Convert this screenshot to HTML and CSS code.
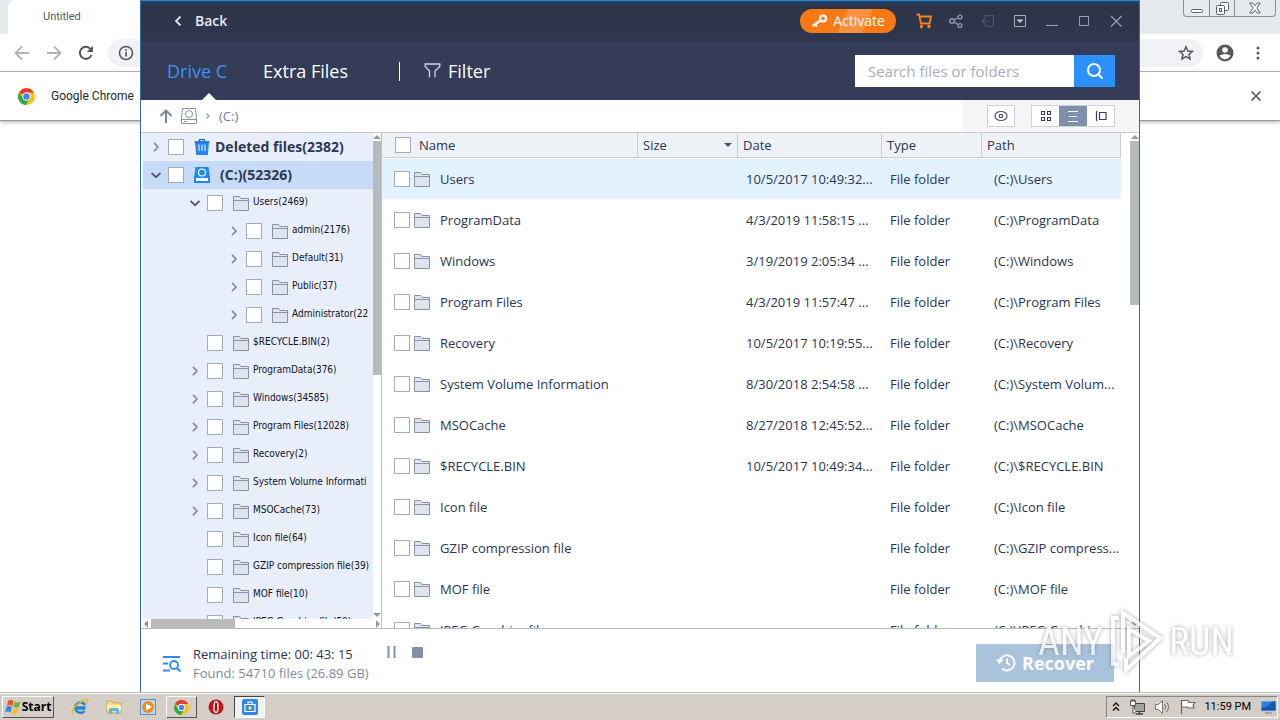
FILE: index.html
```html
<!DOCTYPE html>
<html lang="en">
<head>
<meta charset="utf-8">
<title>File recovery</title>
<link rel="stylesheet" href="styles.css">
</head>
<body>
<svg class="defs" aria-hidden="true">
  <symbol id="folder" viewBox="0 0 16 16"><path d="M.5 15.500V1.500h6l1.500 2h7.500v12z" fill="#dfe5ee" stroke="#8992a3"/><path d="M1 5.500h14" stroke="#8992a3" fill="none"/></symbol>
  <symbol id="right" viewBox="0 0 10 10"><path d="M3 .8 7 5 3 9.200" fill="none" stroke="#858c9a" stroke-width="1.700"/></symbol>
  <symbol id="down" viewBox="0 0 10 10"><path d="M.5 3 5 7.200 9.500 3" fill="none" stroke="#4c5870" stroke-width="1.900"/></symbol>
  <symbol id="chrome" viewBox="0 0 16 16"><circle cx="8" cy="8" r="8" fill="#fbc116"/><path d="M8 8 1 4.200A8 8 0 0 1 15 4.300H8z" fill="#e33b2e"/><path d="M1 4.200A8 8 0 0 0 7.400 16L11 10 8 8 4.500 9.500z" fill="#2da94f"/><circle cx="8" cy="8" r="3.900" fill="#fff"/><circle cx="8" cy="8" r="3" fill="#4285f4"/></symbol>
</svg>

<main class="desktop">
  <section class="browser" aria-label="Browser">
    <div class="tabs">
      <div class="tab">Untitled</div>
      <div class="winbtns">
        <button aria-label="Minimize"><svg width="12" height="12" viewBox="0 0 12 12"><rect x=".5" y="7.500" width="11" height="3" rx="1" fill="#fff" stroke="#5d6268"/></svg></button>
        <button aria-label="Restore"><svg width="13" height="13" viewBox="0 0 13 13" fill="#fff" stroke="#5d6268"><rect x="4.500" y=".5" width="8" height="8" rx="1"/><rect x=".5" y="3.500" width="8" height="9" rx="1"/><rect x="3.500" y="6.500" width="2" height="3"/></svg></button>
        <button class="wide" aria-label="Close"><svg width="12" height="12" viewBox="0 0 12 12"><path d="M.7 1h3L6 3.800 8.300 1h3L7.800 6l3.500 5h-3L6 8.200 3.700 11h-3L4.200 6z" fill="#fff" stroke="#5d6268"/></svg></button>
      </div>
    </div>
    <div class="toolbar">
      <svg width="16" height="16" viewBox="0 0 16 16" fill="none" stroke="#b0b2b5" stroke-width="1.800"><path d="M15 8H2M8 1.500 1.500 8 8 14.500"/></svg>
      <svg width="16" height="16" viewBox="0 0 16 16" fill="none" stroke="#b0b2b5" stroke-width="1.800"><path d="M1 8h13M8 1.500 14.500 8 8 14.500"/></svg>
      <svg width="16" height="16" viewBox="0 0 16 16"><path d="M13.500 10A6 6 0 1 1 12.500 4" fill="none" stroke="#55585c" stroke-width="2"/><path d="M15 .8V7H8.800z" fill="#55585c"/></svg>
      <div class="omnibox">
        <svg width="16" height="16" viewBox="0 0 16 16"><circle cx="8" cy="8" r="6.500" fill="none" stroke="#55585c" stroke-width="1.500"/><path d="M8 7v4.500M8 4.200v1.700" stroke="#55585c" stroke-width="1.700"/></svg>
        <svg width="16" height="16" viewBox="0 0 16 16"><path d="m8 1.800 1.900 4.200 4.600.4-3.500 3 1.100 4.500L8 11.500l-4.100 2.400L5 9.400l-3.500-3L6.100 6z" fill="none" stroke="#55585c" stroke-width="1.500"/></svg>
      </div>
      <svg width="18" height="18" viewBox="0 0 18 18"><circle cx="9" cy="9" r="8.500" fill="#55585c"/><circle cx="9" cy="6" r="2.800" fill="#fff"/><path d="M3.500 11.500q5.500-3 11 0-2 3.700-5.500 3.700t-5.500-3.700z" fill="#fff"/></svg>
      <svg width="16" height="16" viewBox="0 0 16 16" fill="#55585c"><circle cx="8" cy="3" r="1.500"/><circle cx="8" cy="8" r="1.500"/><circle cx="8" cy="13" r="1.500"/></svg>
    </div>
    <div class="infobar">
      <svg width="17" height="17"><use href="#chrome"/></svg><span>Google Chrome</span>
      <button aria-label="Dismiss"><svg width="12" height="12" viewBox="0 0 12 12"><path d="m1.500 1.500 9 9m0-9-9 9" stroke="#5b5e62" stroke-width="1.700"/></svg></button>
    </div>
  </section>

  <section class="app" aria-label="Data recovery">
    <header class="titlebar">
      <button class="back"><svg width="8" height="10" viewBox="0 0 8 10"><path d="M6.500.5 2 5l4.500 4.500" fill="none" stroke="#e6eaf2" stroke-width="1.800"/></svg>Back</button>
      <button class="activate"><svg width="17" height="14" viewBox="0 0 17 14"><circle cx="12" cy="4.500" r="3" fill="none" stroke="#fff" stroke-width="2.200"/><path d="M9.500 6.500 1.500 12M4 10.300l2 2.200" fill="none" stroke="#fff" stroke-width="2.200"/></svg>Activate</button>
      <div class="sys">
        <button aria-label="Cart"><svg viewBox="0 0 16 16" fill="none" stroke="#f58220" stroke-width="1.900"><path d="M.5 1.500H3l2 9h8.500l1.500-7H4"/><circle cx="5.500" cy="13.500" r=".8"/><circle cx="13" cy="13.500" r=".8"/></svg></button>
        <button aria-label="Share"><svg viewBox="0 0 16 16" fill="none" stroke="#8c96ab" stroke-width="1.400"><circle cx="4" cy="8" r="2.300"/><circle cx="12" cy="4" r="1.900"/><circle cx="12" cy="12.500" r="1.900"/><path d="m6 7 4.300-2.200M6 9l4.200 2.600"/></svg></button>
        <button aria-label="Import" disabled><svg viewBox="0 0 16 16" fill="none" stroke="#4a546a" stroke-width="1.200"><path d="M5.500 5V2.500h8v11h-8V11M10 8H2m3-2.500L2 8l3 2.500"/></svg></button>
        <button aria-label="Menu"><svg viewBox="0 0 16 16"><path d="M2.500 2.500h11v11h-11z" fill="none" stroke="#a2abbb"/><path d="M4.500 6.500h7L8 10z" fill="#c4cad6"/></svg></button>
        <button aria-label="Minimize window"><svg viewBox="0 0 16 16"><path d="M2 12.500h12" stroke="#98a2b4"/></svg></button>
        <button aria-label="Maximize window"><svg viewBox="0 0 16 16"><path d="M3.500 3.500h9v9h-9z" fill="none" stroke="#98a2b4"/></svg></button>
        <button aria-label="Close window"><svg viewBox="0 0 16 16"><path d="m3 3 10.500 10.500m0-10.500L3 13.500" stroke="#98a2b4" stroke-width="1.200"/></svg></button>
      </div>
    </header>

    <nav class="nav">
      <a class="navtab current" href="#drive">Drive C</a>
      <a class="navtab" href="#extra">Extra Files</a>
      <span class="rule"></span>
      <button class="filter"><svg width="17" height="16" viewBox="0 0 17 16" fill="none" stroke="#cdd5e3" stroke-width="1.300"><path d="M5.500 14.500V8L1.200 3.500V1h14.600v2.500L11 8v6.500"/></svg>Filter</button>
      <form class="search">
        <input type="text" aria-label="Search files or folders" placeholder="Search files or folders">
        <button type="button" aria-label="Search"><svg width="18" height="18" viewBox="0 0 18 18" fill="none" stroke="#fff" stroke-width="2"><circle cx="8" cy="8" r="6"/><path d="m12.500 12.500 4 4"/></svg></button>
      </form>
    </nav>

    <div class="crumbs">
      <div class="path">
        <svg width="14" height="14" viewBox="0 0 14 14" fill="none" stroke="#7c889d" stroke-width="2"><path d="M7 14V2M1.500 7 7 1.500 12.500 7"/></svg>
        <svg width="18" height="16" viewBox="0 0 18 16" fill="none" stroke="#8692a8"><path d="M2.500.5h13l1 11v4h-15v-4zM1.500 11.500h15"/><circle cx="9" cy="6" r="3.500"/><path d="M4 13.500h3"/></svg>
        <svg width="6" height="8" viewBox="0 0 6 8"><path d="m1.500 1.500 2.500 2.500-2.500 2.500" fill="none" stroke="#8e98aa" stroke-width="1.200"/></svg>
        <span>(C:)</span>
      </div>
      <div class="views">
        <button class="eye" aria-label="Preview"><svg width="14" height="12" viewBox="0 0 14 12" fill="none" stroke="#48536a" stroke-width="1.200"><ellipse cx="7" cy="6" rx="6" ry="4.500"/><circle cx="7" cy="6" r="1.700"/></svg></button>
        <div class="group">
          <button aria-label="Grid view"><svg width="12" height="12" viewBox="0 0 12 12" fill="none" stroke="#33405c" stroke-width="1.100"><path d="M1.500 1.500h3v3h-3zM7.500 1.500h3v3h-3zM1.500 7.500h3v3h-3zM7.500 7.500h3v3h-3z"/></svg></button>
          <button class="on" aria-label="List view"><svg width="12" height="12" viewBox="0 0 12 12"><path d="M1 1.500h10M2 6.500h8M1 11.500h10" stroke="#fff"/></svg></button>
          <button aria-label="Detail view"><svg width="12" height="12" viewBox="0 0 12 12" fill="none" stroke="#33405c" stroke-width="1.200"><path d="M1.500 1v10M4.500 2.500h6.500v7H4.500z"/></svg></button>
        </div>
      </div>
    </div>

    <div class="content">
      <aside class="side">
        <div class="treewrap">
          <div class="tree">
            <label class="node root"><svg class="arr"><use href="#right"/></svg><input type="checkbox"><svg class="ico" viewBox="0 0 16 16"><path d="M1 3h14l-1.200 13H2.200z" fill="#2387f1"/><path d="M.5 2.800h15M5.500 2.500V.7h5v1.800" fill="none" stroke="#1767bd" stroke-width="1.200"/><path d="M5 5.500V12M8 5.500V12M11 5.500V12" stroke="#fff"/></svg><span>Deleted files(2382)</span></label>
            <label class="node root drive"><svg class="arr"><use href="#down"/></svg><input type="checkbox"><svg class="ico" viewBox="0 0 16 16"><path d="M1.500 0h13L16 10v6H0v-6z" fill="#2387f1"/><circle cx="8" cy="5.500" r="3.500" fill="none" stroke="#fff" stroke-width="1.200"/><path d="M2 11h12v3H2z" fill="#fff"/></svg><span>(C:)(52326)</span></label>
            <label class="node sub"><svg class="arr"><use href="#down"/></svg><input type="checkbox"><svg class="ico"><use href="#folder"/></svg><span>Users(2469)</span></label>
            <label class="node leaf"><svg class="arr"><use href="#right"/></svg><input type="checkbox"><svg class="ico"><use href="#folder"/></svg><span>admin(2176)</span></label>
            <label class="node leaf"><svg class="arr"><use href="#right"/></svg><input type="checkbox"><svg class="ico"><use href="#folder"/></svg><span>Default(31)</span></label>
            <label class="node leaf"><svg class="arr"><use href="#right"/></svg><input type="checkbox"><svg class="ico"><use href="#folder"/></svg><span>Public(37)</span></label>
            <label class="node leaf"><svg class="arr"><use href="#right"/></svg><input type="checkbox"><svg class="ico"><use href="#folder"/></svg><span>Administrator(22</span></label>
            <label class="node sub"><svg class="arr"></svg><input type="checkbox"><svg class="ico"><use href="#folder"/></svg><span>$RECYCLE.BIN(2)</span></label>
            <label class="node sub"><svg class="arr"><use href="#right"/></svg><input type="checkbox"><svg class="ico"><use href="#folder"/></svg><span>ProgramData(376)</span></label>
            <label class="node sub"><svg class="arr"><use href="#right"/></svg><input type="checkbox"><svg class="ico"><use href="#folder"/></svg><span>Windows(34585)</span></label>
            <label class="node sub"><svg class="arr"><use href="#right"/></svg><input type="checkbox"><svg class="ico"><use href="#folder"/></svg><span>Program Files(12028)</span></label>
            <label class="node sub"><svg class="arr"><use href="#right"/></svg><input type="checkbox"><svg class="ico"><use href="#folder"/></svg><span>Recovery(2)</span></label>
            <label class="node sub"><svg class="arr"><use href="#right"/></svg><input type="checkbox"><svg class="ico"><use href="#folder"/></svg><span>System Volume Informati</span></label>
            <label class="node sub"><svg class="arr"><use href="#right"/></svg><input type="checkbox"><svg class="ico"><use href="#folder"/></svg><span>MSOCache(73)</span></label>
            <label class="node sub"><svg class="arr"></svg><input type="checkbox"><svg class="ico"><use href="#folder"/></svg><span>Icon file(64)</span></label>
            <label class="node sub"><svg class="arr"></svg><input type="checkbox"><svg class="ico"><use href="#folder"/></svg><span>GZIP compression file(39)</span></label>
            <label class="node sub"><svg class="arr"></svg><input type="checkbox"><svg class="ico"><use href="#folder"/></svg><span>MOF file(10)</span></label>
            <label class="node sub"><svg class="arr"></svg><input type="checkbox"><svg class="ico"><use href="#folder"/></svg><span>JPEG Graphics file(59)</span></label>
          </div>
          <div class="vbar"><i class="up"></i><b class="treethumb"></b><i class="dn"></i></div>
        </div>
        <div class="hbar"><i class="lf"></i><b></b><i class="rt"></i></div>
      </aside>

      <div class="files">
        <table>
          <colgroup><col><col class="c-size"><col class="c-date"><col class="c-type"><col class="c-path"></colgroup>
          <thead><tr><th><label class="cell head"><input type="checkbox">Name</label></th><th><span class="sort">Size<i></i></span></th><th>Date</th><th>Type</th><th>Path</th></tr></thead>
          <tbody>
            <tr class="picked"><td><label class="cell"><input type="checkbox"><svg class="ico"><use href="#folder"/></svg><span>Users</span></label></td><td></td><td>10/5/2017 10:49:32...</td><td>File folder</td><td>(C:)\Users</td></tr>
            <tr><td><label class="cell"><input type="checkbox"><svg class="ico"><use href="#folder"/></svg><span>ProgramData</span></label></td><td></td><td>4/3/2019 11:58:15 ...</td><td>File folder</td><td>(C:)\ProgramData</td></tr>
            <tr><td><label class="cell"><input type="checkbox"><svg class="ico"><use href="#folder"/></svg><span>Windows</span></label></td><td></td><td>3/19/2019 2:05:34 ...</td><td>File folder</td><td>(C:)\Windows</td></tr>
            <tr><td><label class="cell"><input type="checkbox"><svg class="ico"><use href="#folder"/></svg><span>Program Files</span></label></td><td></td><td>4/3/2019 11:57:47 ...</td><td>File folder</td><td>(C:)\Program Files</td></tr>
            <tr><td><label class="cell"><input type="checkbox"><svg class="ico"><use href="#folder"/></svg><span>Recovery</span></label></td><td></td><td>10/5/2017 10:19:55...</td><td>File folder</td><td>(C:)\Recovery</td></tr>
            <tr><td><label class="cell"><input type="checkbox"><svg class="ico"><use href="#folder"/></svg><span>System Volume Information</span></label></td><td></td><td>8/30/2018 2:54:58 ...</td><td>File folder</td><td>(C:)\System Volum...</td></tr>
            <tr><td><label class="cell"><input type="checkbox"><svg class="ico"><use href="#folder"/></svg><span>MSOCache</span></label></td><td></td><td>8/27/2018 12:45:52...</td><td>File folder</td><td>(C:)\MSOCache</td></tr>
            <tr><td><label class="cell"><input type="checkbox"><svg class="ico"><use href="#folder"/></svg><span>$RECYCLE.BIN</span></label></td><td></td><td>10/5/2017 10:49:34...</td><td>File folder</td><td>(C:)\$RECYCLE.BIN</td></tr>
            <tr><td><label class="cell"><input type="checkbox"><svg class="ico"><use href="#folder"/></svg><span>Icon file</span></label></td><td></td><td></td><td>File folder</td><td>(C:)\Icon file</td></tr>
            <tr><td><label class="cell"><input type="checkbox"><svg class="ico"><use href="#folder"/></svg><span>GZIP compression file</span></label></td><td></td><td></td><td>File folder</td><td>(C:)\GZIP compress...</td></tr>
            <tr><td><label class="cell"><input type="checkbox"><svg class="ico"><use href="#folder"/></svg><span>MOF file</span></label></td><td></td><td></td><td>File folder</td><td>(C:)\MOF file</td></tr>
            <tr><td><label class="cell"><input type="checkbox"><svg class="ico"><use href="#folder"/></svg><span>JPEG Graphics file</span></label></td><td></td><td></td><td>File folder</td><td>(C:)\JPEG Graphi...</td></tr>
          </tbody>
        </table>
        <div class="vbar"><i class="up"></i><b class="listthumb"></b><i class="dn"></i></div>
      </div>
    </div>

    <footer class="status">
      <svg width="18" height="18" viewBox="0 0 18 18" fill="none" stroke="#2b8cf0" stroke-width="1.800"><path d="M0 2h17M0 8.500h5M0 15.500h7"/><circle cx="11" cy="10" r="4"/><path d="m14 13 3.500 3.500"/></svg>
      <div class="progress"><p>Remaining time: 00: 43: 15</p><p class="found">Found: 54710 files (26.89 GB)</p></div>
      <div class="controls">
        <button aria-label="Pause"><svg width="12" height="12" viewBox="0 0 12 12"><path d="M2.500 0v12M8.500 0v12" stroke="#8190a8" stroke-width="2"/></svg></button>
        <button aria-label="Stop"><svg width="12" height="12" viewBox="0 0 12 12"><rect x="1" y="1" width="11" height="11" rx="1" fill="#8190a8"/></svg></button>
      </div>
      <button class="recover"><svg width="20" height="18" viewBox="0 0 20 18" fill="none" stroke="#fff" stroke-width="2"><path d="M3.500 8.500a7.500 7.500 0 1 1 2.500 6M11 4.500V9l3 2"/><path d="M0 5.500h7.500L3.500 10z" fill="#fff" stroke="none"/></svg>Recover</button>
    </footer>
  </section>

  <div class="watermark">
    <span>ANY</span>
    <svg width="54" height="66" viewBox="0 0 54 66" fill="none" stroke="#fff" stroke-width="4"><path d="M10 9H4v46h6M14 44V4l37 25L17 61V49"/><path d="M20 20v27l20-15z"/></svg>
    <span>RUN</span>
  </div>
</main>

<footer class="taskbar">
  <button class="start"><svg width="17" height="16" viewBox="0 0 17 16"><path d="M3 2q3-2 5.500 0L7.500 7q-3-2-5.500 0z" fill="#e6562b"/><path d="M9.500 2.500q3 2 6 0L14 8q-3 1.500-5.500 0z" fill="#73b43c"/><path d="M1.500 8q3-2 5.500 0L5.500 13.500q-2.500-2-5.500 0z" fill="#3a86d8"/><path d="M8 9q3 2 5.500 0L12 14.500q-3 1.500-5.500 0z" fill="#f6bd28"/></svg>Start</button>
  <div class="tasks">
    <button aria-label="Internet Explorer"><svg viewBox="0 0 18 18"><path d="M14.500 10.500H5.500M14 7A5.200 5.200 0 1 0 13.500 13M4.500 9.500h10" fill="none" stroke="#2586d8" stroke-width="2.600"/><path d="M2 16Q-1 12 7 6t9.500-4q1 1-.5 3.500" fill="none" stroke="#e8b92e" stroke-width="1.500"/></svg></button>
    <button aria-label="Explorer"><svg viewBox="0 0 18 18"><path d="M2 3h5l1 2h8v10H2z" fill="#f4dc83" stroke="#c8ad58"/><path d="M2 7h14v5H2z" fill="#fbefb4"/><path d="M4 16v-4q0-2 2-2h6q2 0 2 2v4h-3v-3H7v3z" fill="#62b5e0"/></svg></button>
    <button aria-label="Media Player"><svg viewBox="0 0 18 18"><rect x="1.500" y="1.500" width="15" height="15" fill="#bcd9f2" stroke="#5890c8"/><circle cx="9" cy="9" r="6" fill="#f48a1c"/><path d="m7 5.500 6 3.500-6 3.500z" fill="#fff"/></svg></button>
    <button class="raised" aria-label="Chrome"><svg viewBox="0 0 16 16"><use href="#chrome"/></svg></button>
    <button aria-label="Opera"><svg viewBox="0 0 18 18"><circle cx="9" cy="9" r="7.500" fill="#c0151c"/><ellipse cx="9" cy="9" rx="2" ry="5.500" fill="#a20d13" stroke="#fff" stroke-width="1.400"/></svg></button>
    <button class="pressed" aria-label="Data recovery"><svg viewBox="0 0 18 18"><rect x="1" y="1" width="16" height="16" rx="2" fill="#2e88ea"/><path d="M4 6.500h10v7H4zM7 6V4h4v2" fill="none" stroke="#fff" stroke-width="1.200"/><path d="M9 8v4M7 10h4" stroke="#f5d24a" stroke-width="1.500"/></svg></button>
  </div>
  <div class="tray">
    <svg width="8" height="10" viewBox="0 0 8 10" fill="none" stroke="#111" stroke-width="1.400"><path d="m1 4 3-3 3 3M1 8.500l3-3 3 3"/></svg>
    <svg width="16" height="16" viewBox="0 0 16 16"><path d="M5.500 4.500h10v8h-10z" fill="#a4a4a4" stroke="#444"/><path d="M7 15h7M10.500 13v2" stroke="#444" stroke-width="1.500"/><path d="M1.500 1.500h5v5h-5zM4 7v7h3M3 0v3M5 0v3" fill="#fff" stroke="#555"/></svg>
    <svg width="17" height="16" viewBox="0 0 17 16" fill="none" stroke="#777"><path d="M1.500 5.500h3l4-4v13l-4-4h-3z" fill="#fff"/><path d="M10.500 5q2.500 3 0 6M12.500 3q4 5 0 10"/></svg>
    <svg width="16" height="16" viewBox="0 0 16 16"><path d="M1.500 1v14M2 1.500h6l1 2h6l-2 3 1 2.500H8L7 8H2" fill="#fff" stroke="#666" stroke-width="1.200"/></svg>
    <time>11:59 PM</time>
    <svg width="17" height="14" viewBox="0 0 17 14"><path d="M1 1h15v10H1z" fill="#2f7fd8" stroke="#b9c9da"/><path d="M1.500 10.500V8Q9 7 12 1.500h3.500v9z" fill="#1557ad"/><path d="M5 13h7" stroke="#707880"/></svg>
  </div>
</footer>
</body>
</html>
```
FILE: styles.css
```css
* { box-sizing: border-box; }
body { margin: 0; height: 100vh; display: flex; flex-direction: column; overflow: hidden; background: #fff; color: #2c3550; font: 13px/20px "Open Sans", "Noto Sans", sans-serif; }
button { border: 0; padding: 0; background: none; color: inherit; font: inherit; display: flex; align-items: center; justify-content: center; }
svg { flex: none; display: block; }
p { margin: 0; }
.defs { position: absolute; width: 0; height: 0; }
.desktop { flex: 1; min-height: 0; position: relative; }

.tabs { height: 34px; background: #e7eaed; display: flex; justify-content: space-between; padding-left: 8px; }
.tab { width: 240px; border-radius: 8px 8px 0 0; background: #fff; padding-left: 35px; font: 11px/34px Roboto, sans-serif; color: #55595e; }
.winbtns { display: flex; height: 17px; margin-right: 4px; border: 1px solid #8c9197; border-top: 0; border-radius: 0 0 4px 4px; }
.winbtns button { width: 25px; }
.winbtns button + button { border-left: 1px solid #8c9197; }
.winbtns .wide { width: 41px; }
.toolbar { height: 38px; display: flex; align-items: center; gap: 16px; padding: 0 14px; border-bottom: 1px solid #b0b2b4; }
.omnibox { flex: 1; height: 28px; margin-left: -2px; margin-right: -3px; border-radius: 14px; background: #f0f2f5; display: flex; align-items: center; justify-content: space-between; padding: 0 9px 0 10px; }
.infobar { height: 49px; display: flex; align-items: center; gap: 16px; padding: 0 18px; font: 12px/20px Roboto, sans-serif; color: #26282b; border-bottom: 1px solid #999; box-shadow: 0 1px 4px #aaa; }
.infobar button { margin-left: auto; }

.app { position: absolute; top: 0; bottom: 0; left: 140px; right: 140px; display: flex; flex-direction: column; background: #fff; border: 1px solid #3a6d9c; border-width: 0 1px; }
.titlebar { height: 42px; background: linear-gradient(#3d84bd 0 1px, #1d446c 1px 3px, #2d3449 5px, #2d374e); display: flex; align-items: center; padding: 0 15px 0 33px; color: #e6eaf2; }
.back { gap: 13px; font-size: 14px; font-weight: 600; }
.activate { margin-left: auto; width: 96px; height: 24px; border-radius: 12px; background: linear-gradient(115deg, #f97a15 45%, #fa9140 45% 68%, #f97a15 68%); gap: 5px; font-size: 14px; color: #fff; }
.sys { display: flex; gap: 16px; margin-left: 20px; }
.sys svg { width: 16px; height: 16px; }
.nav { height: 58px; background: #343c58; display: flex; align-items: center; padding: 0 24px 0 26px; color: #fff; font-size: 18px; }
.navtab { position: relative; line-height: 58px; margin-right: 36px; color: #fff; text-decoration: none; }
.navtab.current { color: #3d92f0; }
.navtab.current::after { content: ""; position: absolute; bottom: 0; left: 35px; border: 7px solid transparent; border-top: 0; border-bottom-color: #fff; }
.rule { width: 1px; height: 19px; background: #fff; margin: 0 24px 0 15px; }
.filter { gap: 7px; }
.search { display: flex; margin-left: auto; height: 32px; width: 260px; }
.search input { flex: 1; min-width: 0; border: 0; padding: 0 13px; background: #fff; font: 15px/20px "Open Sans", sans-serif; color: #333; }
.search input::placeholder { color: #a5adbb; opacity: 1; }
.search button { width: 41px; background: #2c90fa; }

.crumbs { height: 33px; display: flex; justify-content: space-between; border-bottom: 1px solid #c8ccd1; }
.path { display: flex; align-items: center; gap: 8px; padding-left: 18px; color: #717d93; }
.path svg + svg { margin-left: -1px; }
.views { width: 177px; background: #f5f5f5; display: flex; align-items: center; gap: 16px; padding-left: 25px; }
.views button { width: 28px; height: 22px; background: #fff; }
.views .eye, .group { border: 1px solid #ccd2db; }
.views .group button { width: 27px; height: 20px; }
.views .group .on { width: 28px; background: #8090ac; }
.group { display: flex; }

.content { flex: 1; min-height: 0; display: flex; }
.side { width: 241px; border-right: 1px solid #bfc3c8; display: flex; flex-direction: column; }
.treewrap { flex: 1; min-height: 0; display: flex; }
.tree { flex: 1; min-width: 0; overflow: hidden; background: #e8effa; border-left: 2px solid #f4faff; }
.node { height: 28px; display: flex; align-items: center; white-space: nowrap; font: 10px/14px "DejaVu Sans Condensed", "DejaVu Sans", sans-serif; color: #10131c; }
.arr { width: 10px; height: 10px; }
.ico { width: 16px; height: 16px; }
.node .ico { margin-left: 10px; }
.node span { margin-left: 4px; padding-bottom: 3px; }
.root { padding-left: 8px; font: bold 14px/20px "Open Sans", sans-serif; color: #2c3850; }
.root span { margin-left: 5px; padding: 0; }
.drive { background: #c5dbf7; }
.drive span { margin-left: 10px; }
.sub { padding-left: 47px; }
.leaf { padding-left: 86px; }
input[type="checkbox"] { appearance: none; flex: none; width: 16px; height: 16px; margin: 0; border: 1px solid #a4acb9; background: #fff; }
.node input { margin-left: 7px; }
.vbar { width: 8px; display: flex; flex-direction: column; align-items: center; background: #fff; }
.vbar b { width: 100%; background: #b7babd; margin-bottom: auto; }
.treethumb { height: 234px; }
.listthumb { height: 164px; }
.vbar i, .hbar i { border: 4px solid transparent; }
.vbar .up { border-top: 0; border-bottom-color: #96999c; margin: 2px 0; }
.vbar .dn { border-bottom: 0; border-top-color: #96999c; margin: 2px 0; }
.hbar { height: 9px; display: flex; align-items: center; padding: 0 1px 0 3px; }
.hbar b { width: 84px; height: 100%; background: #bbb; margin: 0 auto 0 3px; }
.hbar .lf { border-left: 0; border-right-color: #96999c; }
.hbar .rt { border-right: 0; border-left-color: #96999c; }

.files { flex: 1; min-width: 0; display: flex; justify-content: space-between; gap: 9px; overflow: hidden; }
.files .vbar { width: 9px; flex: none; }
table { flex: 1; min-width: 0; height: 0; border-collapse: separate; border-spacing: 0; table-layout: fixed; }
.c-size { width: 100px; }
.c-date { width: 144px; }
.c-type { width: 100px; }
.c-path { width: 139px; }
th { height: 25px; padding: 0 0 0 5px; text-align: left; font-weight: 400; background: #eef2f6; border-right: 1px solid #c9ced5; border-bottom: 1px solid #c9ced5; }
td { height: 41px; padding: 0; white-space: nowrap; overflow: hidden; }
td:nth-child(3), td:nth-child(4) { padding-left: 8px; }
td:nth-child(5) { padding-left: 12px; }
th:first-child { padding-left: 13px; }
td:first-child { padding-left: 12px; }
tbody tr.picked td { background: #e2f2fe; border-top: 1px solid #fff; }
.cell { display: flex; align-items: center; gap: 4px; }
.head { gap: 8px; }
.cell span { margin-left: 6px; }
.sort { display: flex; align-items: center; justify-content: space-between; padding-right: 5px; }
.sort i { border: 4px solid transparent; border-top-color: #505664; border-bottom: 0; }

.status { height: 64px; border-top: 1px solid #b8bcc1; display: flex; align-items: center; padding: 6px 25px 0 22px; }
.progress { width: 182px; margin-left: 12px; line-height: 19px; white-space: nowrap; }
.found { color: #848a95; }
.controls { display: flex; gap: 13px; margin: -24px auto 0 11px; }
.recover { width: 138px; height: 38px; margin-bottom: 2px; gap: 6px; background: #a9c3dc; color: #fff; font-size: 18px; font-weight: 700; }

.watermark { position: absolute; right: 46px; bottom: 17px; display: flex; align-items: center; gap: 6px; font: 38px/40px "Liberation Sans Narrow", "Roboto Condensed", Roboto, sans-serif; color: #fff; opacity: .75; filter: drop-shadow(0 0 2px rgba(90, 90, 90, .7)); pointer-events: none; }

.taskbar { height: 28px; border-top: 1px solid #b9b9b9; box-shadow: inset 0 1px #fff; background: #d5cec7; display: flex; align-items: center; padding: 3px 2px 2px; }
.taskbar > button, .raised { border: 1px solid; border-color: #fff #555 #555 #fff; }
.start { width: 52px; height: 22px; font-size: 12px; font-weight: 700; color: #000; }
.tasks { display: flex; gap: 3px; margin-left: 10px; }
.tasks button { width: 31px; height: 22px; }
.tasks svg { width: 18px; height: 18px; }
.tasks .raised svg { width: 15px; height: 15px; }
.tasks .pressed { border: 1px solid; border-color: #444 #fff #fff #444; background: #f4f2f0; }
.tray { margin-left: auto; width: 172px; height: 22px; border: 1px solid; border-color: #8a857f #fff #fff #8a857f; display: flex; align-items: center; justify-content: space-between; padding: 0 0 0 5px; font: 11px/20px Roboto, sans-serif; color: #000; }
```
